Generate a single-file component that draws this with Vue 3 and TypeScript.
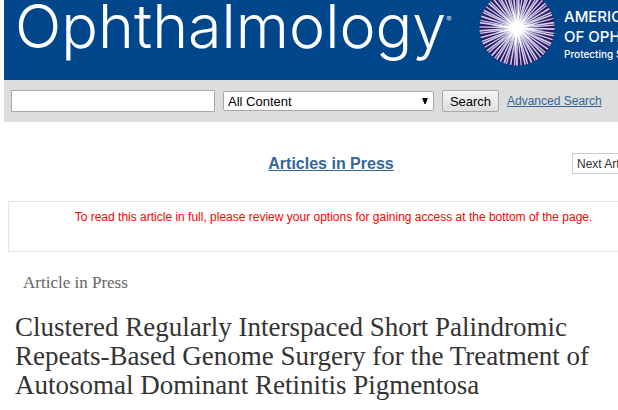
<script setup lang="ts">
import { ref } from 'vue'

interface Ray {
  points: string
}

const query = ref('')
const scope = ref('All Content')

const center = 38

const point = (angle: number, radius: number): string =>
  `${(center + Math.cos(angle) * radius).toFixed(2)},${(center + Math.sin(angle) * radius).toFixed(2)}`

const rays: Ray[] = Array.from({ length: 66 }, (_, i) => {
  const angle = (i / 66) * Math.PI * 2 + 0.03 + [0, 0.018, -0.012][i % 3]
  const spread = [0.024, 0.018, 0.021, 0.016][i % 4]
  return {
    points: `${point(angle - 1.57, 0.7)} ${point(angle - spread, 37.5)} ${point(angle + spread, 37.5)} ${point(angle + 1.57, 0.7)}`,
  }
})

const glints: Ray[] = Array.from({ length: 20 }, (_, i) => {
  const angle = (i / 20) * Math.PI * 2 + 0.1
  const reach = [27, 15, 20, 13, 23][i % 5]
  return { points: `${point(angle - 1.57, 1.6)} ${point(angle, reach)} ${point(angle + 1.57, 1.6)}` }
})
</script>

<template>
  <div class="page">
    <header class="masthead">
      <div class="brand">Ophthalmology<sup class="mark">®</sup></div>
      <svg class="burst" viewBox="0 0 76 76" aria-hidden="true">
        <circle cx="38" cy="38" r="37.5" fill="#2e1a69" />
        <polygon v-for="(ray, i) in rays" :key="i" :points="ray.points" fill="#d2cee6" />
        <polygon v-for="(ray, i) in glints" :key="'g' + i" :points="ray.points" fill="#fff" />
        <circle cx="38" cy="38" r="6" fill="#fff" />
      </svg>
      <div class="society">
        <span>AMERICAN ACADEMY</span>
        <span>OF OPHTHALMOLOGY</span>
        <small>Protecting Sight</small>
      </div>
    </header>

    <form class="search" @submit.prevent>
      <input v-model="query" class="query" type="text" aria-label="Search terms" />
      <div class="scope">
        <select v-model="scope" aria-label="Search in">
          <option>All Content</option>
        </select>
        <svg class="arrow" viewBox="0 0 6 6" aria-hidden="true"><path d="M0 0h6L3.5 6h-1z" /></svg>
      </div>
      <button class="submit" type="submit">Search</button>
      <a class="advanced" href="#">Advanced Search</a>
    </form>

    <main class="content">
      <nav class="issue">
        <a class="current" href="#">Articles in Press</a>
        <button class="next" type="button">Next Article</button>
      </nav>
      <p class="notice">
        To read this article in full, please review your options for gaining access at the bottom of the page.
      </p>
      <p class="kind">Article in Press</p>
      <h1>
        Clustered Regularly Interspaced Short Palindromic<br />
        Repeats-Based Genome Surgery for the Treatment of<br />
        Autosomal Dominant Retinitis Pigmentosa
      </h1>
    </main>
  </div>
</template>

<style>
body {
  background: #fff;
}
</style>

<style scoped>
.page {
  padding-left: 4px;
  overflow: hidden;
  font-family: "Liberation Sans", Arial, sans-serif;
  font-size: 12px;
  color: #333;
}
.masthead {
  display: flex;
  align-items: flex-start;
  height: 80px;
  background: #00468b;
  color: #fff;
  overflow: hidden;
  white-space: nowrap;
}
.brand {
  flex: none;
  box-sizing: border-box;
  width: 475px;
  padding-left: 11px;
  font-family: Inter, sans-serif;
  font-weight: 300;
  font-size: 61px;
  line-height: 52px;
}
.mark {
  font-size: 8px;
  line-height: 8px;
  vertical-align: 26px;
}
.burst {
  flex: none;
  width: 76px;
  height: 76px;
  margin-top: -10px;
}
.society {
  display: flex;
  flex-direction: column;
  margin-left: 9px;
  padding-top: 7px;
  font-family: Inter, sans-serif;
  font-weight: 500;
  font-size: 15px;
  line-height: 20px;
}
.society small {
  font-size: 10px;
  line-height: 14px;
}
.search {
  display: flex;
  align-items: center;
  height: 42px;
  padding-left: 7px;
  background: #ddd;
}
.query,
.submit,
select {
  box-sizing: border-box;
  margin: 0;
  border: 1px solid #a9a9a9;
  font-family: inherit;
  font-size: 13px;
  color: #000;
}
.query {
  width: 204px;
  height: 22px;
  background: #fff;
}
.scope {
  position: relative;
  width: 211px;
  margin-left: 8px;
}
select {
  display: block;
  appearance: none;
  width: 100%;
  height: 20px;
  padding: 0 4px;
  border-radius: 2px;
  background: #fff;
}
.arrow {
  position: absolute;
  top: 7px;
  right: 6px;
  width: 6px;
  height: 6px;
  pointer-events: none;
}
.submit {
  width: 57px;
  height: 22px;
  margin-left: 8px;
  padding: 0;
  border-radius: 2px;
  background: linear-gradient(#f6f6f6, #dedede);
}
.advanced {
  margin-left: 8px;
  color: #369;
}
.content {
  margin-right: -41px;
  padding-left: 4px;
}
.issue {
  display: grid;
  grid-template-columns: 1fr auto 1fr;
  align-items: center;
  height: 79px;
  padding: 4px 5px 0 0;
  box-sizing: border-box;
}
.current {
  grid-column: 2;
  color: #369;
  font-size: 16px;
  font-weight: 700;
}
.next {
  justify-self: end;
  height: 21px;
  width: 82px;
  box-sizing: border-box;
  padding: 0 4px;
  border: 1px solid #ccc;
  background: #fff;
  font: inherit;
  color: #333;
  text-align: left;
  white-space: nowrap;
}
.notice {
  box-sizing: border-box;
  min-height: 51px;
  margin: 0;
  padding-top: 7px;
  border: 1px solid #e2e2e2;
  color: #f00;
  line-height: 16px;
  text-align: center;
}
.kind {
  margin: 20px 0 0 15px;
  font-family: Georgia, "Liberation Serif", serif;
  font-size: 17px;
  line-height: 22px;
  color: #666;
}
h1 {
  margin: 19px 0 0 7px;
  font-family: Georgia, "Liberation Serif", serif;
  font-size: 27px;
  font-weight: 400;
  line-height: 29px;
  white-space: nowrap;
}
</style>
